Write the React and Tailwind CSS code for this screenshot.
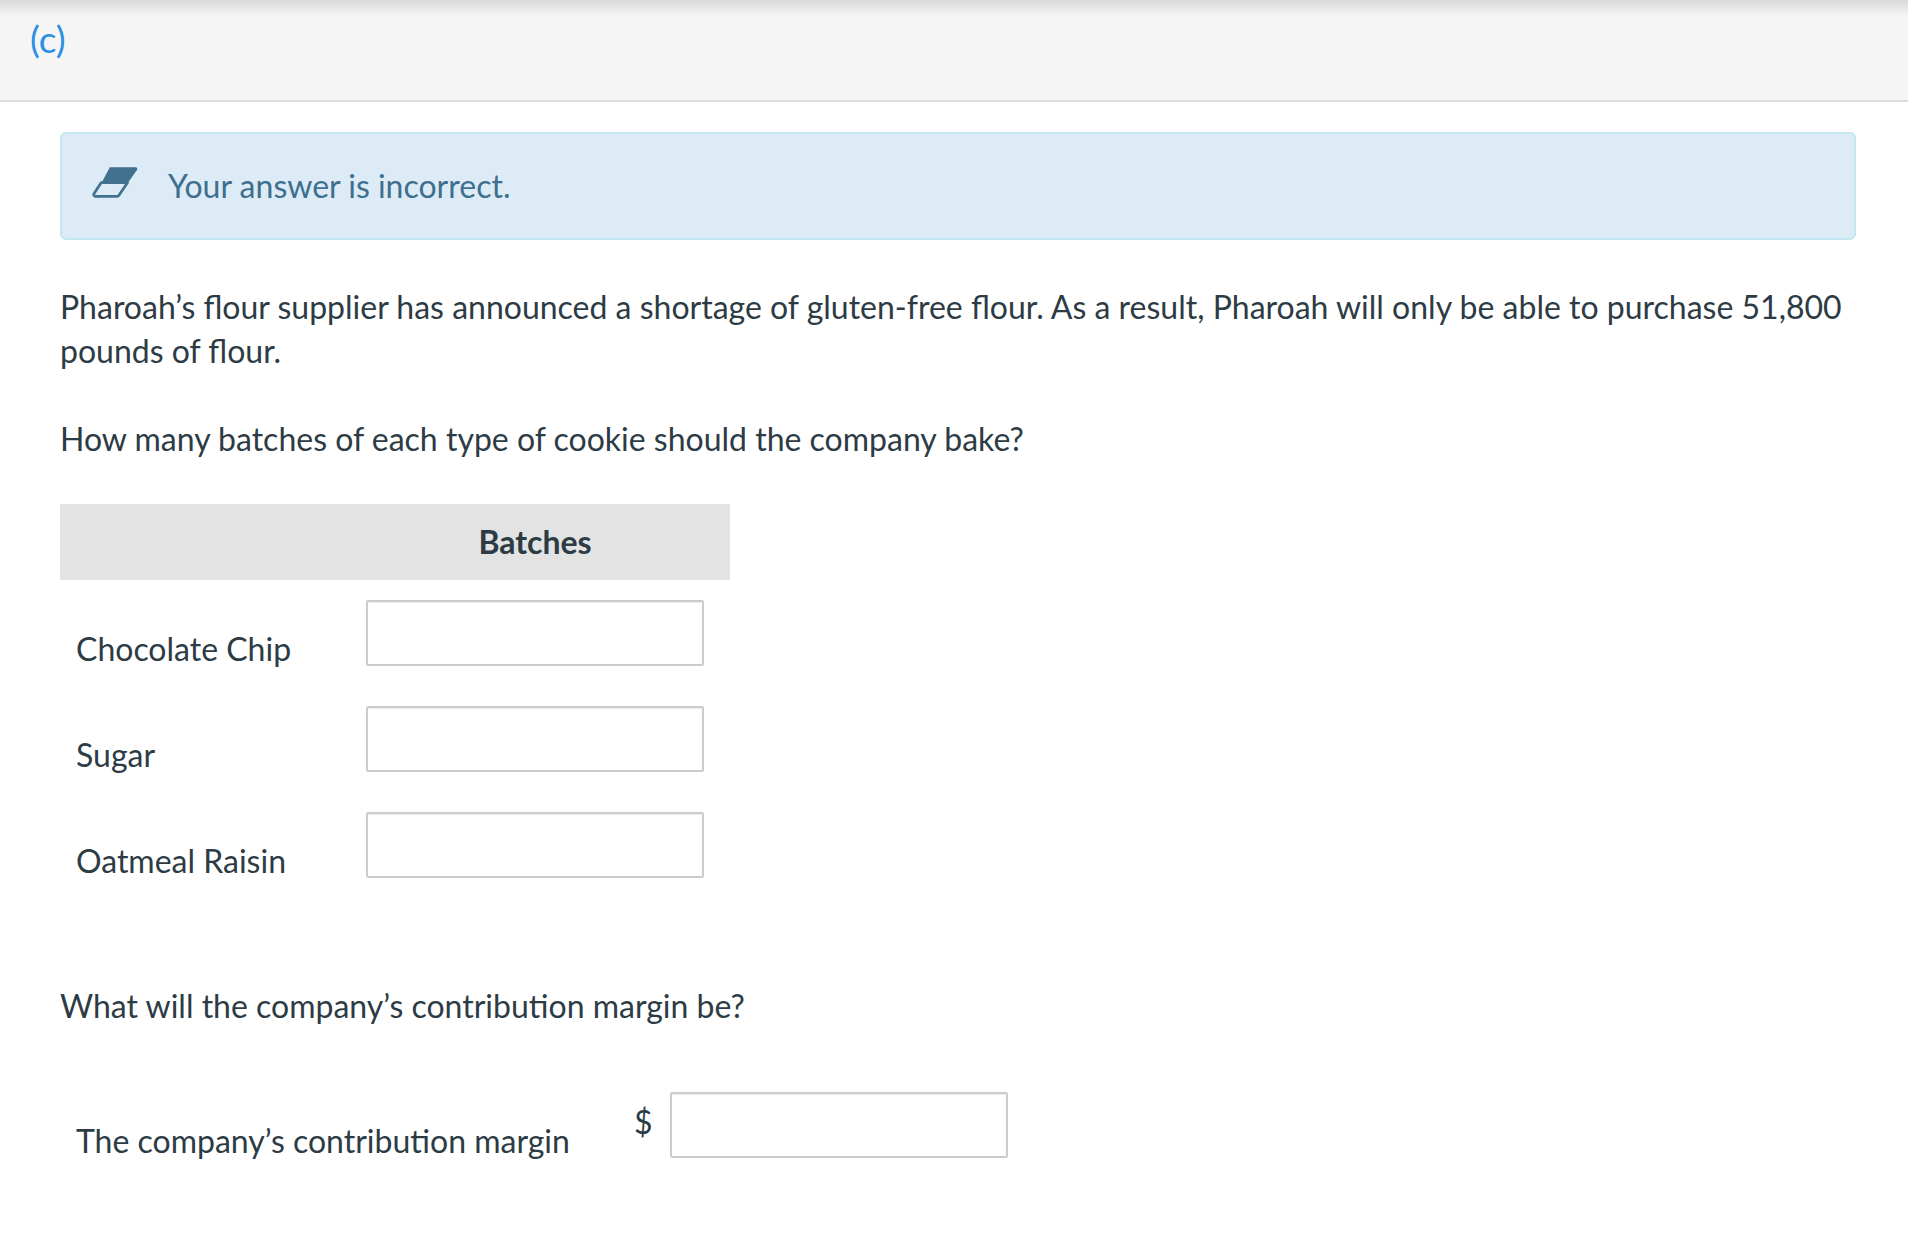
const Field = ({ className = "" }) => (
  <div className={`h-[66px] w-[338px] rounded-[2px] border-2 border-[#cccccc] bg-white shadow-[inset_0_1px_1px_rgba(0,0,0,0.08)] ${className}`} />
);

const rows = ["Chocolate Chip", "Sugar", "Oatmeal Raisin"];

export default function App() {
  return (
    <div className="min-h-[1236px] bg-white font-['Lato','Noto_Sans',sans-serif] text-[32px] leading-[44px] text-[#2d3b45]">
      <div className="h-[102px] border-b-2 border-[#dcdcdc] bg-[#f5f5f5] bg-gradient-to-b from-[#d9d9d9] via-[#f5f5f5] via-[16%] to-[#f5f5f5] pl-[30px] pt-[16px]">
        <span className="text-[37px] leading-[46px] text-[#2d8fe3]">(c)</span>
      </div>
      <div className="pl-[60px] pr-[52px] pt-[30px]">
        <div className="flex h-[108px] items-center rounded-[6px] border-2 border-[#c4e6f0] bg-[#ddebf6] pl-[30px] text-[#3d6f8e]">
          <svg width="46" height="32" viewBox="0 0 40 28" fill="none" className="mb-[8px] mr-[30px]">
            <path d="M15.5 1H38a1.5 1.5 0 0 1 1.2 2.4L31 15H8Z" fill="#41718f" />
            <path d="M8 14.5h23L23.5 25.6a2 2 0 0 1-1.6.9H3a1.6 1.6 0 0 1-1.3-2.5Z" stroke="#41718f" strokeWidth="2.4" strokeLinejoin="round" />
          </svg>
          <span>Your answer is incorrect.</span>
        </div>
        <p className="mt-[45px]">
          Pharoah’s flour supplier has announced a shortage of gluten-free flour. As a result, Pharoah will only be able to purchase 51,800 pounds of flour.
        </p>
        <p className="mt-[44px]">How many batches of each type of cookie should the company bake?</p>
        <div className="mt-[43px] w-[670px]">
          <div className="flex h-[76px] items-center bg-[#e3e3e3] pl-[306px]">
            <div className="w-[338px] text-center font-bold">Batches</div>
          </div>
          <div className="flex flex-col gap-[40px] pt-[20px]">
            {rows.map((r) => (
              <div key={r} className="flex h-[66px]">
                <div className="mt-[27px] w-[306px] pl-[16px]">{r}</div>
                <Field />
              </div>
            ))}
          </div>
        </div>
        <p className="mt-[106px]">What will the company’s contribution margin be?</p>
        <div className="mt-[64px] flex h-[66px]">
          <div className="mt-[27px] w-[574px] pl-[16px]">The company’s contribution margin</div>
          <div className="mt-[8px] w-[36px]">$</div>
          <Field />
        </div>
      </div>
    </div>
  );
}
